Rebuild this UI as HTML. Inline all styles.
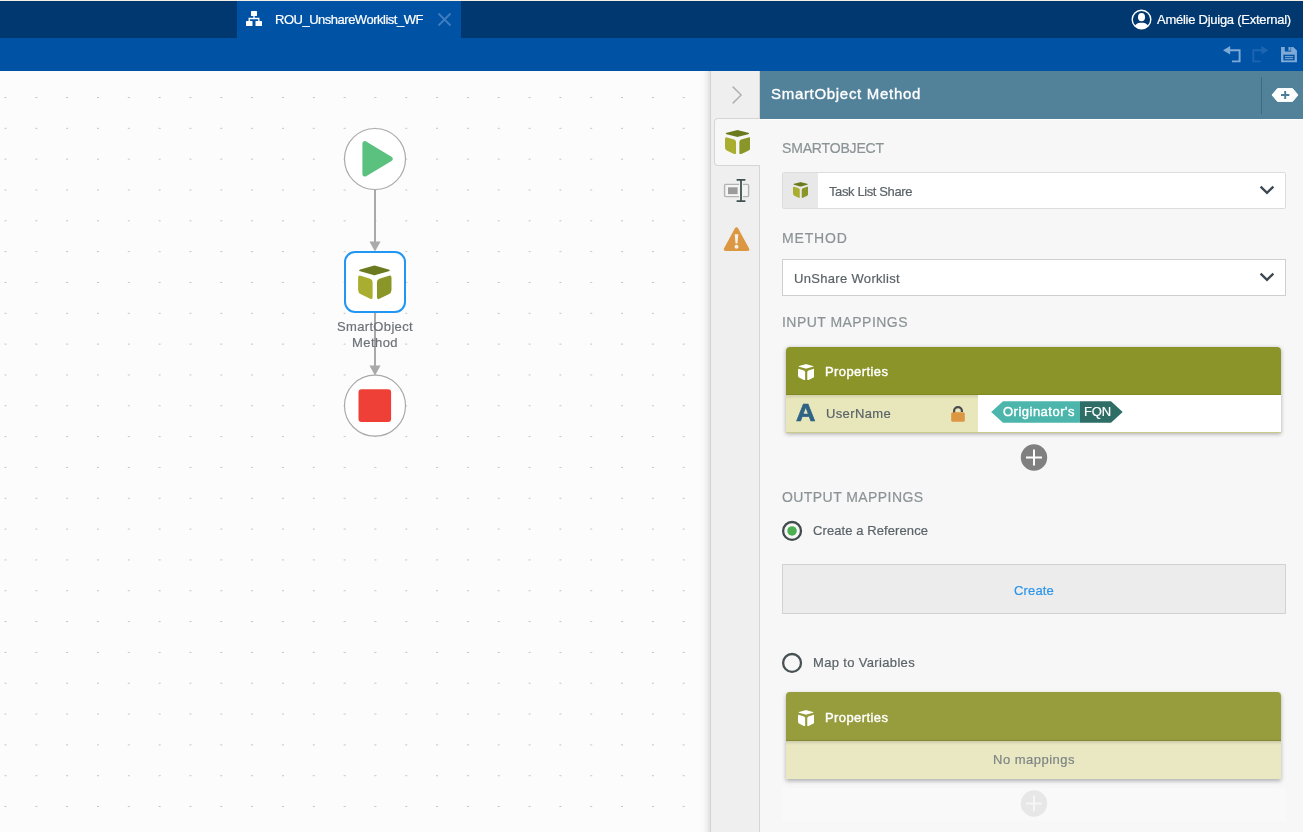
<!DOCTYPE html>
<html lang="en">
<head>
<meta charset="utf-8">
<title>ROU_UnshareWorklist_WF</title>
<style>
*{box-sizing:border-box;margin:0;padding:0}
html,body{width:1303px;height:832px;overflow:hidden}
body{position:relative;background:#fcfcfc;font-family:"Liberation Sans",sans-serif;font-size:13px;color:#5a6368}
.abs{position:absolute}
.t{position:absolute;white-space:nowrap;line-height:1;will-change:transform;-webkit-text-stroke:.2px}
/* top chrome */
#topline{left:0;top:0;width:1303px;height:1px;background:#f3efe6}
#topbar{left:0;top:1px;width:1303px;height:37px;background:#00386f}
#tab{left:237px;top:1px;width:224px;height:37px;background:#0052a4}
#toolbar{left:0;top:38px;width:1303px;height:33px;background:#0052a4}
/* canvas */
#canvas{left:0;top:71px;width:711px;height:761px;background-color:#fcfcfc;
 background-image:radial-gradient(ellipse 1.1px 0.7px at 1px 0.5px,#c4c4c4 0,#c4c4c4 60%,rgba(196,196,196,0) 100%);
 background-size:30.83px 30.83px;background-position:4.5px 26px}
/* panel */
#pshadow{left:700px;top:71px;width:11px;height:761px;background:linear-gradient(to right,rgba(0,0,0,0) 0,rgba(0,0,0,.015) 35%,rgba(0,0,0,.05) 65%,rgba(0,0,0,.11) 88%,rgba(0,0,0,.19) 100%)}
#side{left:711px;top:71px;width:49px;height:761px;background:#efefef;border-right:1px solid #d6d6d6}
#sidetab{left:714px;top:118px;width:47px;height:48px;background:#f7f7f7;border:1px solid #d6d6d6;border-right:none;border-radius:4px 0 0 4px}
#phead{left:760px;top:71px;width:543px;height:48px;background:#52819a}
#pbody{left:760px;top:119px;width:543px;height:713px;background:#f7f7f7;border-top:1px solid #fff}
.lbl{font-size:14px;color:#8b9396}
.dd{background:#fff;border:1px solid #d4d4d4;left:782px;width:504px;height:37px}
.card{left:786px;width:495px;border-radius:4px 4px 0 0;box-shadow:0 1px 3px rgba(0,0,0,.35)}
</style>
</head>
<body>
<div class="abs" id="topline"></div>
<div class="abs" id="topbar"></div>
<div class="abs" id="tab"></div>
<div class="abs" id="toolbar"></div>
<div class="abs" id="canvas"></div>
<div class="abs" id="pshadow"></div>
<div class="abs" id="side"></div>
<div class="abs" id="sidetab"></div>
<div class="abs" id="phead"></div>
<div class="abs" id="pbody"></div>
<!-- tab icon (org chart) -->
<svg class="abs" style="left:245px;top:10px" width="18" height="18" viewBox="0 0 18 18">
 <g fill="#fff"><rect x="6" y="1" width="6" height="5" rx=".5"/><rect x="1" y="11" width="6.5" height="5" rx=".5"/><rect x="10.5" y="11" width="6.5" height="5" rx=".5"/></g>
 <path d="M9 6v2.5M4.2 11V8.5h9.6V11" fill="none" stroke="#fff" stroke-width="1.3"/>
</svg>
<div class="t" style="left:275px;top:13px;font-size:13px;color:#fff;letter-spacing:-.49px">ROU_UnshareWorklist_WF</div>
<svg class="abs" style="left:437px;top:12px" width="15" height="15" viewBox="0 0 15 15"><path d="M1.5 1.5l12 12M13.5 1.5l-12 12" stroke="#3f7cc0" stroke-width="1.8" fill="none"/></svg>
<!-- user -->
<svg class="abs" style="left:1131.4px;top:9px" width="21" height="21" viewBox="0 0 21 21">
 <defs><clipPath id="uc"><circle cx="10.5" cy="10.5" r="9.4"/></clipPath></defs>
 <circle cx="10.5" cy="10.5" r="9.3" fill="none" stroke="#fff" stroke-width="1.4"/>
 <g clip-path="url(#uc)" fill="#fff"><ellipse cx="10.5" cy="8.2" rx="3.5" ry="4.1"/><path d="M3.4 20c0-4.6 2.6-6.3 7.1-6.3s7.1 1.7 7.1 6.3z"/></g>
</svg>
<div class="t" style="left:1157px;top:13px;font-size:13px;color:#fff;letter-spacing:-.26px">Amélie Djuiga (External)</div>
<!-- toolbar icons -->
<svg class="abs" style="left:1222px;top:45px" width="20" height="19" viewBox="0 0 20 19"><path d="M1 5.2L8.2 0.9v8.6z" fill="#7fa9d6"/><path d="M7.5 5.2H17.6V16.4H10" fill="none" stroke="#7fa9d6" stroke-width="1.9"/></svg>
<svg class="abs" style="left:1251px;top:45px" width="20" height="19" viewBox="0 0 20 19"><path d="M17.4 5.2L10.4 0.9v8.6z" fill="#1d64b1"/><path d="M11 5.2H2.3V16.4H9.6" fill="none" stroke="#1d64b1" stroke-width="1.9"/></svg>
<svg class="abs" style="left:1279.8px;top:45.8px" width="18" height="17.2" viewBox="0 0 17 17" preserveAspectRatio="none"><path d="M1 1h11.5L16 4.5V16H1z" fill="#7fa9d6"/><rect x="4.5" y="1" width="6" height="4.5" fill="#0052a4"/><rect x="8" y="1" width="2" height="3.6" fill="#7fa9d6"/><rect x="3.2" y="8.6" width="10.6" height="5.6" fill="#0052a4"/><rect x="4.6" y="10" width="7.8" height="1" fill="#7fa9d6"/><rect x="4.6" y="12" width="7.8" height="1" fill="#7fa9d6"/></svg>
<svg class="abs" style="left:300px;top:110px;will-change:transform" width="160" height="340" viewBox="300 110 160 340">
 <!-- connectors -->
 <path d="M375 190V243" stroke="#aaa" stroke-width="2" fill="none"/>
 <path d="M369.4 241.5h11.2L375 251.5z" fill="#aaa"/>
 <path d="M375 313V367" stroke="#aaa" stroke-width="2" fill="none"/>
 <path d="M369.4 365.5h11.2L375 375.5z" fill="#aaa"/>
 <!-- start -->
 <circle cx="375" cy="159" r="30.5" fill="#fff" stroke="#aaa" stroke-width="1.2"/>
 <path d="M364.9 143.7V174.1L390.2 158.9z" fill="#5bc17f" stroke="#5bc17f" stroke-width="5" stroke-linejoin="round"/>
 <!-- smartobject node -->
 <rect x="345" y="252" width="60" height="60" rx="10" fill="#fff" stroke="#2196f3" stroke-width="2"/>
 <g transform="translate(358.1 265.5) scale(0.0605) translate(-135 -124)">
  <path d="M388 129Q405 122 422 129L640 189Q678 205 640 221L422 281Q405 288 388 281L170 221Q132 205 170 189Z" fill="#6c7a1f"/><path d="M135 328Q135 279 178 293L335 344Q375 358 375 402V645Q375 693 335 675L182 598Q135 576 135 528Z" fill="#a9ae30"/><path d="M687 328Q687 279 644 293L487 344Q447 358 447 402V645Q447 693 487 675L640 598Q687 576 687 528Z" fill="#8b9628"/>
 </g>
 <!-- end -->
 <circle cx="375" cy="405.7" r="30.5" fill="#fff" stroke="#aaa" stroke-width="1.2"/>
 <rect x="358.5" y="389.3" width="32.6" height="32.6" rx="3" fill="#ee4036"/>
 <text x="375" y="331" text-anchor="middle" font-size="13" fill="#6c7278" stroke="#6c7278" stroke-width=".2" letter-spacing=".34" font-family="Liberation Sans, sans-serif">SmartObject</text>
 <text x="375" y="347" text-anchor="middle" font-size="13" fill="#6c7278" stroke="#6c7278" stroke-width=".2" letter-spacing=".44" font-family="Liberation Sans, sans-serif">Method</text>
</svg>
<!-- sidebar icons -->
<svg class="abs" style="left:728px;top:82px" width="18" height="26" viewBox="0 0 18 26"><path d="M4.7 4.6l8.4 8.4-8.4 8.4" fill="none" stroke="#b2b2b2" stroke-width="1.5"/></svg>
<svg class="abs" style="left:725px;top:129.6px" width="25.4" height="24.6" viewBox="135 124 552 563" preserveAspectRatio="none">
  <path d="M388 129Q405 122 422 129L640 189Q678 205 640 221L422 281Q405 288 388 281L170 221Q132 205 170 189Z" fill="#6c7a1f"/><path d="M135 328Q135 279 178 293L335 344Q375 358 375 402V645Q375 693 335 675L182 598Q135 576 135 528Z" fill="#a9ae30"/><path d="M687 328Q687 279 644 293L487 344Q447 358 447 402V645Q447 693 487 675L640 598Q687 576 687 528Z" fill="#8b9628"/>
</svg>
<svg class="abs" style="left:722px;top:177px" width="30" height="27" viewBox="0 0 30 27">
 <rect x="2.6" y="7.4" width="24" height="12.2" rx="1" fill="#f4f4f4" stroke="#b3b3b3" stroke-width="1.4"/>
 <rect x="6" y="10.3" width="9.6" height="6.8" fill="#9b9b9b"/>
 <path d="M19 2.7v21.6" stroke="#f1f1f1" stroke-width="4" fill="none"/>
 <path d="M14.6 2.8h8.8M14.6 24.2h8.8M19 2.7v21.6" stroke="#425252" stroke-width="1.8" fill="none"/>
</svg>
<svg class="abs" style="left:723px;top:226px" width="27" height="26" viewBox="0 0 27 26">
 <path d="M13.5 3.2L24.5 23.3H2.5z" fill="#dc9743" stroke="#dc9743" stroke-width="3.6" stroke-linejoin="round"/>
 <path d="M11.7 8.3h3.6l-.8 9.2h-2z" fill="#f3efe9"/><circle cx="13.5" cy="20.8" r="2" fill="#f3efe9"/>
</svg>
<!-- header -->
<div class="t" style="left:771px;top:86px;font-size:15px;font-weight:400;-webkit-text-stroke:.35px #fff;color:#fff;letter-spacing:.69px">SmartObject Method</div>
<div class="abs" style="left:1261px;top:77px;width:1px;height:37px;background:#3b6a87"></div>
<svg class="abs" style="left:1271px;top:87px" width="28" height="16" viewBox="0 0 28 16">
 <path d="M6.5 1.6h15L27 8l-5.5 6.4h-15L1 8z" fill="#fff" stroke="#fff" stroke-width="1" stroke-linejoin="round"/>
 <path d="M10 8h8.4M14.2 3.9v8.2" stroke="#4f7c96" stroke-width="1.9" fill="none"/>
</svg>
<!-- form -->
<div class="t lbl" style="left:782px;top:141px;letter-spacing:-.16px">SMARTOBJECT</div>
<div class="abs dd" style="top:172px;border-color:#dcdcdc;border-radius:2px"></div>
<div class="abs" style="left:783px;top:173px;width:35px;height:35px;background:#e8e8e8;border-radius:1px 0 0 1px"></div>
<svg class="abs" style="left:792.8px;top:181.8px" width="15.5" height="16.2" viewBox="135 124 552 563" preserveAspectRatio="none">
  <path d="M388 129Q405 122 422 129L640 189Q678 205 640 221L422 281Q405 288 388 281L170 221Q132 205 170 189Z" fill="#6c7a1f"/><path d="M135 328Q135 279 178 293L335 344Q375 358 375 402V645Q375 693 335 675L182 598Q135 576 135 528Z" fill="#a9ae30"/><path d="M687 328Q687 279 644 293L487 344Q447 358 447 402V645Q447 693 487 675L640 598Q687 576 687 528Z" fill="#8b9628"/>
</svg>
<div class="t" style="left:829px;top:185px;letter-spacing:-.39px">Task List Share</div>
<svg class="abs" style="left:1258px;top:183px" width="18" height="14" viewBox="0 0 18 14"><path d="M2.6 3.6L9 9.9l6.4-6.3" fill="none" stroke="#3d4852" stroke-width="2.3"/></svg>
<div class="t lbl" style="left:782px;top:231px;letter-spacing:.85px">METHOD</div>
<div class="abs dd" style="top:259px;border-color:#cfcfcf"></div>
<div class="t" style="left:794px;top:272px;letter-spacing:.32px">UnShare Worklist</div>
<svg class="abs" style="left:1258px;top:270px" width="18" height="14" viewBox="0 0 18 14"><path d="M2.6 3.6L9 9.9l6.4-6.3" fill="none" stroke="#3d4852" stroke-width="2.3"/></svg>
<div class="t lbl" style="left:782px;top:315px;letter-spacing:.46px">INPUT MAPPINGS</div>
<!-- input card -->
<div class="abs card" style="top:347px;height:86px;background:#fff;box-shadow:0 1px 4px rgba(0,0,0,.32)">
 <div class="abs" style="left:0;top:0;width:495px;height:48px;background:#8b9428;border-radius:4px 4px 0 0;box-shadow:inset 0 -1px 0 rgba(0,0,0,.07)"></div>
 <div class="abs" style="left:0;top:48px;width:192px;height:37px;background:#e8e6bb"></div>
 <div class="abs" style="left:0;top:48px;width:192px;height:4px;background:linear-gradient(rgba(0,0,0,.10),rgba(0,0,0,0))"></div>
 <div class="abs" style="left:0;top:85px;width:495px;height:1px;background:#c9cb8c"></div>
</div>
<svg class="abs" style="left:798.1px;top:363.8px" width="16.4" height="16.4" viewBox="135 124 552 563" preserveAspectRatio="none">
  <path d="M388 129Q405 122 422 129L640 189Q678 205 640 221L422 281Q405 288 388 281L170 221Q132 205 170 189Z" fill="#fff"/><path d="M135 328Q135 279 178 293L335 344Q375 358 375 402V645Q375 693 335 675L182 598Q135 576 135 528Z" fill="#fff"/><path d="M687 328Q687 279 644 293L487 344Q447 358 447 402V645Q447 693 487 675L640 598Q687 576 687 528Z" fill="#fff"/>
</svg>
<div class="t" style="left:825px;top:365px;font-weight:400;-webkit-text-stroke:.4px #fff;color:#fff;letter-spacing:.41px">Properties</div>
<div class="t" style="left:796px;top:401px;font-size:24px;font-weight:700;color:#2e6485;-webkit-text-stroke:.7px #2e6485;transform:scaleX(1.12);transform-origin:0 0">A</div>
<div class="t" style="left:826px;top:407px;letter-spacing:.36px">UserName</div>
<svg class="abs" style="left:950px;top:404px" width="16" height="19" viewBox="0 0 16 19">
 <path d="M4.1 9V7a3.9 3.9 0 0 1 7.8 0V7.9" fill="none" stroke="#484b4d" stroke-width="2.2"/>
 <rect x="1.2" y="8.2" width="13.6" height="9.6" rx="1.6" fill="#dc9743"/>
</svg>
<!-- token -->
<svg class="abs" style="left:990px;top:400px;will-change:transform" width="134" height="24" viewBox="990 400 134 24">
 <path d="M991.2 412L1003 401.2H1080V422.8H1003z" fill="#4db6ac"/>
 <path d="M1080 401.2H1111L1122.7 412L1111 422.8H1080z" fill="#2e6e67"/>
 <text x="1003" y="415.6" font-size="13" fill="#fff" stroke="#fff" stroke-width=".4" letter-spacing=".49" font-family="Liberation Sans, sans-serif">Originator's</text>
 <text x="1084" y="415.6" font-size="13" fill="#fff" stroke="#fff" stroke-width=".2" letter-spacing="-.15" font-family="Liberation Sans, sans-serif">FQN</text>
</svg>
<svg class="abs" style="left:1020px;top:444px" width="28" height="28" viewBox="0 0 28 28"><circle cx="14" cy="13.5" r="13.2" fill="#808080"/><path d="M6 13.5h16M14 5.5v16" stroke="#fff" stroke-width="2" fill="none"/></svg>
<!-- output -->
<div class="t lbl" style="left:782px;top:490px;letter-spacing:.43px">OUTPUT MAPPINGS</div>
<svg class="abs" style="left:780px;top:519px" width="24" height="24" viewBox="0 0 24 24"><circle cx="12.05" cy="11.95" r="10.6" fill="#fdfdfd"/><circle cx="12.05" cy="11.95" r="8.95" fill="#f7f7f7" stroke="#424b4e" stroke-width="2.3"/><circle cx="12.05" cy="11.95" r="4.75" fill="#4caf50"/></svg>
<div class="t" style="left:813px;top:524px;letter-spacing:.09px">Create a Reference</div>
<div class="abs" style="left:782px;top:564px;width:504px;height:50px;background:#ececec;border:1px solid #d2d2d2"></div>
<div class="t" style="left:1014px;top:584px;color:#2b95ea;letter-spacing:.16px">Create</div>
<svg class="abs" style="left:780px;top:651px" width="24" height="24" viewBox="0 0 24 24"><circle cx="12.05" cy="11.95" r="10.6" fill="#fdfdfd"/><circle cx="12.05" cy="11.95" r="8.95" fill="#f7f7f7" stroke="#485154" stroke-width="2.3"/></svg>
<div class="t" style="left:813px;top:656px;letter-spacing:.34px">Map to Variables</div>
<div class="abs" style="left:782px;top:788px;width:504px;height:33px;background:#f9f9f9"></div>
<!-- output card -->
<div class="abs card" style="top:692px;height:87px;background:#eae8c3;box-shadow:0 2px 4px rgba(0,0,0,.3)">
 <div class="abs" style="left:0;top:0;width:495px;height:49px;background:#979d3d;border-radius:4px 4px 0 0;box-shadow:inset 0 -2px 1px -1px rgba(0,0,0,.14)"></div>
 <div class="abs" style="left:0;top:49px;width:495px;height:4px;background:linear-gradient(rgba(0,0,0,.13),rgba(0,0,0,0))"></div>
</div>
<svg class="abs" style="left:798.1px;top:709.8px" width="16.4" height="16.4" viewBox="135 124 552 563" preserveAspectRatio="none">
  <path d="M388 129Q405 122 422 129L640 189Q678 205 640 221L422 281Q405 288 388 281L170 221Q132 205 170 189Z" fill="#fff"/><path d="M135 328Q135 279 178 293L335 344Q375 358 375 402V645Q375 693 335 675L182 598Q135 576 135 528Z" fill="#fff"/><path d="M687 328Q687 279 644 293L487 344Q447 358 447 402V645Q447 693 487 675L640 598Q687 576 687 528Z" fill="#fff"/>
</svg>
<div class="t" style="left:825px;top:711px;font-weight:400;-webkit-text-stroke:.4px #fff;color:#fff;letter-spacing:.41px">Properties</div>
<div class="t" style="left:993px;top:753px;color:#7d8584;letter-spacing:.49px">No mappings</div>
<svg class="abs" style="left:1020px;top:790px" width="28" height="28" viewBox="0 0 28 28"><circle cx="14" cy="13.5" r="13.2" fill="#e7e7e7"/><path d="M6 13.5h16M14 5.5v16" stroke="#f5f5f5" stroke-width="2" fill="none"/></svg>
</body>
</html>
